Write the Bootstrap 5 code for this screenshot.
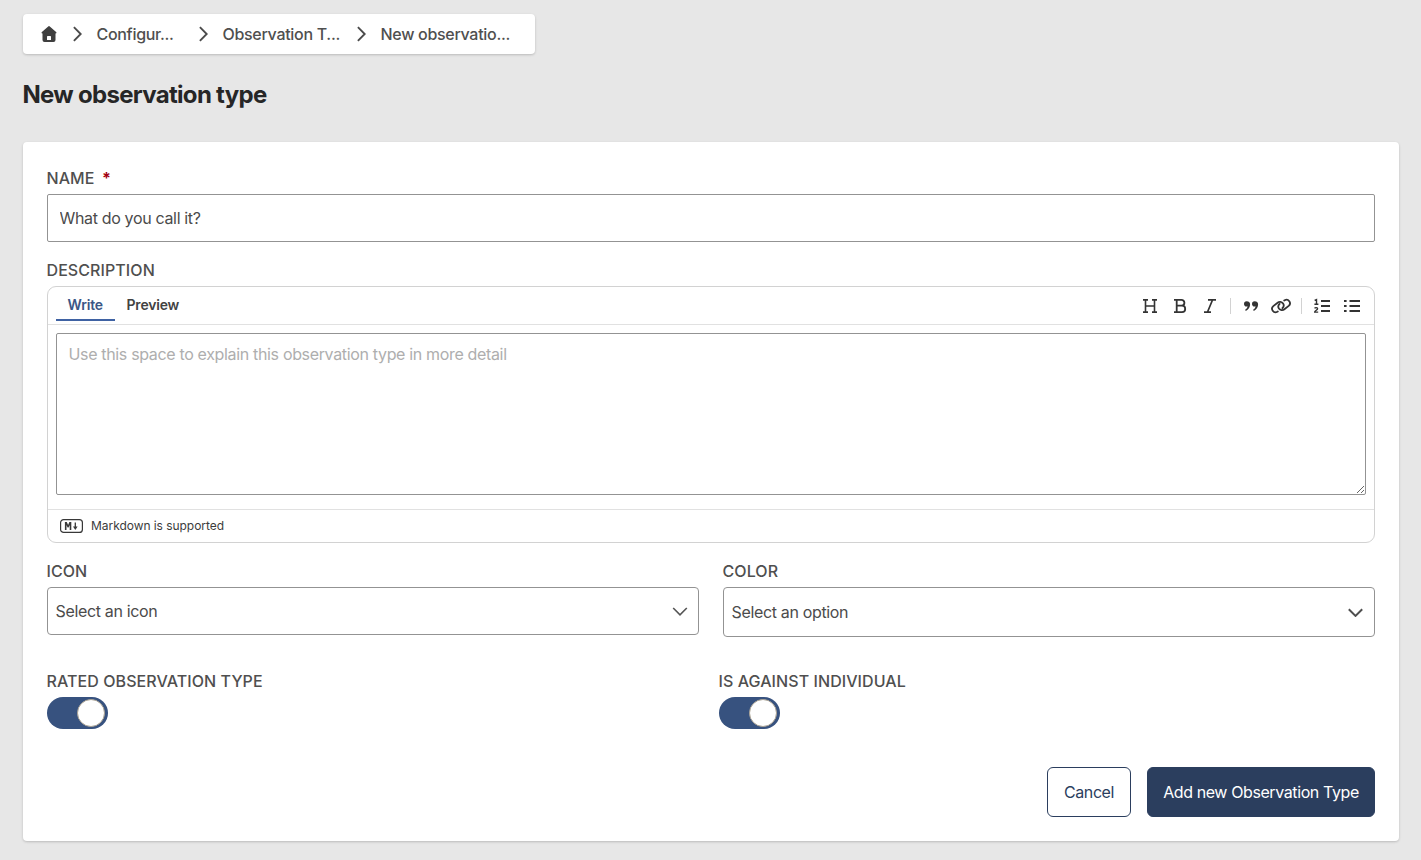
<!DOCTYPE html>
<html lang="en">
<head>
<meta charset="utf-8">
<meta name="viewport" content="width=device-width, initial-scale=1">
<title>New observation type</title>
<link rel="stylesheet" href="https://cdn.jsdelivr.net/npm/bootstrap@5.3.0/dist/css/bootstrap.min.css">
<style>
body{background:#e7e7e7;font-family:Inter,"Liberation Sans",sans-serif;font-size:16px;line-height:24px;letter-spacing:-.34px;color:#4b4b4b}
svg{display:block;flex:none}
.page{padding:14px 22px 19px 23px}
.crumbs{width:512px;height:40px;padding-left:17.5px;border-radius:4px;font-weight:500;letter-spacing:-.3px;color:#4f4f4f}
.crumbs a{color:inherit;text-decoration:none;white-space:nowrap}
.crumbs .sep{margin:0 15px 0 16px}
.crumb-config{width:102px}
.crumb-types{width:134px}
.panel-shadow{background:#fff;box-shadow:0 1px 3px rgba(0,0,0,.12),0 1px 2px rgba(0,0,0,.08)}
h1{font-size:24px;line-height:32px;font-weight:700;letter-spacing:-.7px;color:#262626;margin:25px 0 31px -.5px}
.panel{border-radius:4px;height:699px;padding:24px}
.cap{display:block;font-weight:500;letter-spacing:.08px;margin:0 0 4px -.5px;color:#4f4f4f;text-transform:uppercase;white-space:nowrap}
.star{color:#a30010;font-weight:700;margin-left:3px}
.name-box{height:48px;border:1px solid #939393;border-radius:2px;padding:0 11.5px;color:#4b4b4b;letter-spacing:inherit}
.name-box::placeholder{color:#4b4b4b;opacity:1}
.editor{height:257px;border:1px solid #d2d2d2;border-radius:9px}
.editor-head{height:38px;border-bottom:1px solid #e1e1e1;padding:0 14px 0 8px}
.tab{height:34px;padding:0 12px 0 11.5px;line-height:36px;font-size:14px;font-weight:600;letter-spacing:-.2px;border:0;border-bottom:2px solid transparent;background:none;color:#424242}
.tab.on{width:59px;color:#3b5686;border-color:#3f62a3}
.tools{color:#333}
.rule{width:1px;height:16px;background:#d2d2d2}
.editor textarea{display:block;width:1310px;height:162px;margin:8px 8px 14px;border:1px solid #939393;border-radius:2px;padding:8px 11.5px;letter-spacing:inherit}
.editor textarea::placeholder{color:#aeaeae}
.editor-foot{border-top:1px solid #e1e1e1;font-size:12px;letter-spacing:-.05px;height:33px;padding-left:12px;color:#3c3c3c}
.pick{height:48px;border:1px solid #939393;border-radius:4px;padding:0 10px 0 7.5px;background:#fff}
.pick.tall{height:50px}
.switches{margin-top:32px}
.switches>div:first-child{width:672px}
.switch-track{width:61px;height:32px;border-radius:16px;background:#37527f;padding:2px 3px 2px 2px}
.knob{width:28px;height:28px;border-radius:50%;background:#fff;border:1px solid #aaa293}
.actions{margin-top:38px}
.act{height:50px;border-radius:6px;border:1px solid #2b3e5e;padding:0;letter-spacing:-.4px}
.act-cancel{width:84px;color:#2b3e5e;background:#fff}
.act-add{width:228px;color:#fff;background:#2b3e5e}
</style>
</head>
<body>
<main class="page">
  <nav class="crumbs panel-shadow d-flex align-items-center" aria-label="Breadcrumb">
    <a href="#"><svg width="16" height="16" viewBox="0 0 16 16"><path fill="#3f3f3f" fill-rule="evenodd" d="M7.200.4a1.200 1.200 0 0 1 1.600 0l6.300 5.500c.8.7.4 1.700-.6 1.700V14a2 2 0 0 1-2 2h-9a2 2 0 0 1-2-2V7.600c-1 0-1.400-1-.6-1.700zM6.700 10a.7.7 0 0 0-.7.7V14h4v-3.300a.7.7 0 0 0-.7-.7z"/></svg></a>
    <svg class="sep" width="9" height="16" viewBox="0 0 9 16" fill="none" stroke="#4b4b4b" stroke-width="1.900"><path d="M.9 1.200 7.700 8 .9 14.800"/></svg>
    <a href="#" class="crumb-config">Configur...</a>
    <svg width="9" height="16" viewBox="0 0 9 16" fill="none" stroke="#4b4b4b" stroke-width="1.900" style="margin-right:15px"><path d="M.9 1.200 7.700 8 .9 14.800"/></svg>
    <a href="#" class="crumb-types">Observation T...</a>
    <svg width="9" height="16" viewBox="0 0 9 16" fill="none" stroke="#4b4b4b" stroke-width="1.900" style="margin-right:15px"><path d="M.9 1.200 7.700 8 .9 14.800"/></svg>
    <a href="#">New observatio...</a>
  </nav>
  <h1>New observation type</h1>
  <form class="panel panel-shadow">
    <div class="mb-3">
      <label class="cap" for="name">Name <span class="star">*</span></label>
      <input class="name-box d-block w-100" id="name" placeholder="What do you call it?">
    </div>
    <label class="cap" for="desc">Description</label>
    <div class="editor mb-3">
      <div class="editor-head d-flex justify-content-between">
        <div class="d-flex"><button type="button" class="tab on">Write</button><button type="button" class="tab">Preview</button></div>
        <div class="tools d-flex align-items-center">
          <svg width="16" height="16" viewBox="0 0 16 16" fill="none" stroke="currentColor" stroke-width="1.600"><path d="M1 1.900h5M10 1.900h5M1 14.100h5M10 14.100h5M3.500 2v12M12.500 2v12M3.500 8h9"/></svg>
          <svg style="margin-left:14px" width="16" height="16" viewBox="0 0 16 16" fill="none" stroke="currentColor" stroke-width="1.800"><path d="M2 1.900h7.500a2.900 2.900 0 0 1 0 5.800H4.500M4.500 7.700H10a3.200 3.200 0 0 1 0 6.400H2M4.700 2v12"/></svg>
          <svg style="margin-left:14px" width="16" height="16" viewBox="0 0 16 16" fill="none" stroke="currentColor" stroke-width="1.700"><path d="M6 1.900h8M2 14.100h7M10.500 2 5.500 14"/></svg>
          <span class="rule" style="margin:0 12px 0 12px"></span>
          <svg width="16" height="16" viewBox="0 0 16 16" fill="currentColor"><path d="M3.600 3.200A2.700 2.700 0 0 0 1 5.900c0 1.500 1 2.600 2.400 2.600.5 0 .9-.1 1.200-.3-.2 1.400-.9 2.400-2.200 3.400-.6.500 0 1.500.8 1.100C5.700 11.200 7.100 9 7.100 6.400c0-2-1.400-3.200-3.500-3.200zM11.600 3.200A2.700 2.700 0 0 0 9 5.900c0 1.500 1 2.600 2.400 2.600.5 0 .9-.1 1.200-.3-.2 1.400-.9 2.400-2.200 3.400-.6.500 0 1.500.8 1.100 2.500-1.500 3.900-3.700 3.900-6.300 0-2-1.400-3.200-3.500-3.200z"/></svg>
          <svg style="margin-left:12px" width="20" height="16" viewBox="0 0 20 16" fill="none" stroke="currentColor" stroke-width="1.800" stroke-linecap="round"><path d="M6.800 13.500l-.5.300A3.500 3.500 0 0 1 2.300 8.100L6.600 4.700a3.700 3.700 0 0 1 5.500.7c1 1.600.6 3.500-.7 4.700"/><path d="M13.200 2.500l.5-.3a3.500 3.500 0 0 1 4 5.700l-4.300 3.400a3.700 3.700 0 0 1-5.500-.7c-1-1.600-.6-3.500.7-4.700"/></svg>
          <span class="rule" style="margin:0 12px 0 10px"></span>
          <svg width="16" height="16" viewBox="0 0 16 16" fill="none" stroke="currentColor"><path stroke-width="1.800" d="M7 3h9.300M7 8h9.300M7 13h9.300"/><path stroke-width="1.400" d="M.6 2.300 2.500 1.500v4.700M.4 6.200h4M.6 10.300c.6-1 3-.9 3 .5 0 1-2.700 1.900-3 3.300h3.600"/></svg>
          <svg style="margin-left:14px" width="16" height="16" viewBox="0 0 16 16" fill="none" stroke="currentColor" stroke-width="1.800"><path d="M5.500 3H16M5.500 8H16M5.500 13H16"/><path stroke-width="2.200" d="M0 3h2.600M0 8h2.600M0 13h2.600"/></svg>
        </div>
      </div>
      <textarea id="desc" placeholder="Use this space to explain this observation type in more detail"></textarea>
      <div class="editor-foot d-flex align-items-center gap-2">
        <svg width="23" height="14" viewBox="0 0 23 14" fill="none" stroke="#383838"><rect x=".6" y=".6" width="21.800" height="12.800" rx="3" stroke-width="1.200"/><path fill="#383838" stroke="none" d="M4.900 3h1.900l1.300 2.900L9.400 3h1.900v8H9.700V6.100L8.600 8.600h-1L6.500 6.100V11H4.900z"/><path stroke-width="1.300" d="M15.300 3.500v5"/><path fill="#383838" stroke="none" d="M13 7.600h4.600L15.300 11z"/></svg>
        <span>Markdown is supported</span>
      </div>
    </div>
    <div class="row">
      <div class="col-6">
        <span class="cap">Icon</span>
        <div class="pick d-flex align-items-center justify-content-between" role="combobox">Select an icon
          <svg width="16" height="10" viewBox="0 0 16 10" fill="none" stroke="#555" stroke-width="1.600"><path d="M1.200 2 8 8.800 14.800 2"/></svg></div>
      </div>
      <div class="col-6">
        <span class="cap">Color</span>
        <div class="pick tall d-flex align-items-center justify-content-between" role="combobox">Select an option
          <svg width="16" height="10" viewBox="0 0 16 10" fill="none" stroke="#4f4f4f" stroke-width="2"><path d="M.8 2.200 7.500 8.900l6.700-6.700"/></svg></div>
      </div>
    </div>
    <div class="d-flex switches">
      <div><span class="cap">Rated observation type</span><div class="switch-track d-flex justify-content-end" role="switch" aria-checked="true"><span class="knob"></span></div></div>
      <div><span class="cap">Is against individual</span><div class="switch-track d-flex justify-content-end" role="switch" aria-checked="true"><span class="knob"></span></div></div>
    </div>
    <div class="d-flex justify-content-end gap-3 actions">
      <button type="button" class="btn act act-cancel">Cancel</button>
      <button type="button" class="btn act act-add">Add new Observation Type</button>
    </div>
  </form>
</main>
<script src="https://cdn.jsdelivr.net/npm/bootstrap@5.3.0/dist/js/bootstrap.bundle.min.js"></script>
</body>
</html>
